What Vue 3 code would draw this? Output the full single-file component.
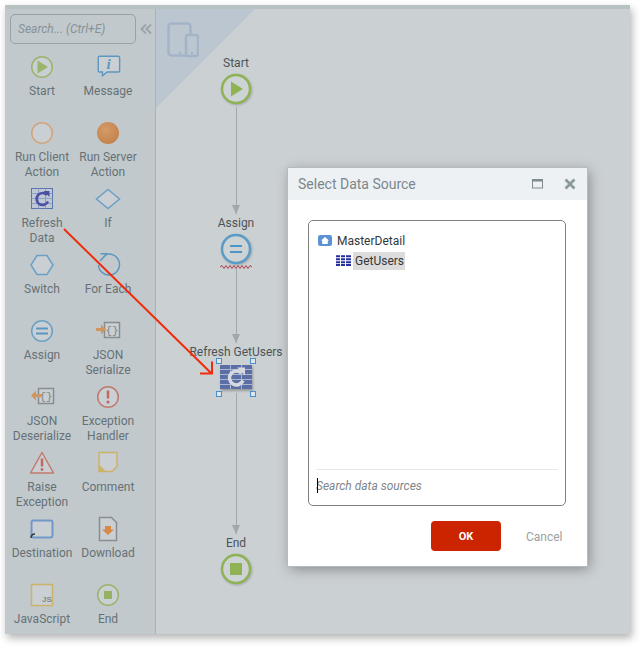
<template>
  <div class="page">
    <div class="window">
      <aside class="toolbox">
        <div class="search-row">
          <div class="search">Search... (Ctrl+E)</div>
          <svg class="collapse" width="12" height="12" viewBox="0 0 12 12"><path d="M6 1.500 1.500 6 6 10.500M11 1.500 6.500 6l4.500 4.500" fill="none" stroke="#9aa6ac" stroke-width="2"/></svg>
        </div>
        <div class="tools">
          <div v-for="tool in tools" :key="tool.name" class="tool">
            <svg class="tool-icon" width="28" height="28" viewBox="0 0 28 28">
              <template v-if="tool.icon === 'start'">
                <circle cx="14" cy="14" r="10.300" fill="#c9cfd2" stroke="#9ab56c" stroke-width="1.500"/>
                <path d="M9.500 7.500 20 14 9.500 20.500z" fill="#9ab56c"/>
              </template>
              <template v-else-if="tool.icon === 'message'">
                <path d="M5 3.500h20a1.500 1.500 0 0 1 1.500 1.500v14a1.500 1.500 0 0 1-1.500 1.500H13l-5 4v-4H5A1.500 1.500 0 0 1 3.500 19V5A1.500 1.500 0 0 1 5 3.500z" fill="#c9cfd2" stroke="#5c97bf" stroke-width="1.500" transform="translate(1 0) scale(.93)"/>
                <text x="14.500" y="16" class="i-mark">i</text>
              </template>
              <circle v-else-if="tool.icon === 'client'" cx="14" cy="14" r="10.300" fill="#c9cfd2" stroke="#d3a47c" stroke-width="1.500"/>
              <template v-else-if="tool.icon === 'server'">
                <defs>
                  <radialGradient id="server-fill" cx="40%" cy="35%" r="70%">
                    <stop offset="0" stop-color="#d49a68"/>
                    <stop offset="1" stop-color="#c4824a"/>
                  </radialGradient>
                </defs>
                <circle cx="14" cy="14" r="11" fill="url(#server-fill)"/>
              </template>
              <template v-else-if="tool.icon === 'refresh'">
                <rect x="3.500" y="3.500" width="21" height="20" fill="#c0c8d4" stroke="#5a74ad"/>
                <path d="M3.500 8.500h21M3.500 13.500h21M3.500 18.500h21M10.500 3.500v20M17.500 3.500v20" stroke="#8f9fc4"/>
                <path d="M19 10a6 6 0 1 0 1 6.500" fill="none" stroke="#4a4fa3" stroke-width="2.500"/>
                <path d="M15.500 6h6v6z" fill="#4a4fa3"/>
              </template>
              <path v-else-if="tool.icon === 'if'" d="M14 4.500 25.500 14 14 23.500 2.500 14z" fill="#c9cfd2" stroke="#6ba0c6" stroke-width="1.500"/>
              <path v-else-if="tool.icon === 'switch'" d="M9 4.500h10L25 14l-6 9.500H9L3 14z" fill="#c9cfd2" stroke="#6ba0c6" stroke-width="1.500"/>
              <template v-else-if="tool.icon === 'foreach'">
                <path d="M10 3.800A10.500 10.500 0 1 1 3.500 14" fill="none" stroke="#5c97bf" stroke-width="1.500" transform="translate(1 0)"/>
                <path d="M6.500 2.800h7M12.800 2.800 6 10" fill="none" stroke="#5c97bf" stroke-width="1.500"/>
              </template>
              <template v-else-if="tool.icon === 'assign'">
                <circle cx="14" cy="14" r="10.300" fill="#c9cfd2" stroke="#6ba0c6" stroke-width="1.500"/>
                <path d="M8 11.500h12M8 16.500h12" stroke="#5c97bf" stroke-width="2"/>
              </template>
              <template v-else-if="tool.icon === 'serialize'">
                <rect x="10.500" y="5.500" width="15" height="15" fill="#c9cfd2" stroke="#868e91" stroke-width="1.500"/>
                <text x="18" y="16.500" class="braces">{}</text>
                <path d="M2 11.500h5V8l5 5-5 5v-3.500H2z" fill="#d19560" transform="translate(0 -.500)"/>
              </template>
              <template v-else-if="tool.icon === 'deserialize'">
                <rect x="10.500" y="5.500" width="15" height="15" fill="#c9cfd2" stroke="#868e91" stroke-width="1.500"/>
                <text x="18" y="16.500" class="braces">{}</text>
                <path d="M13 11.500H7V8l-5 5 5 5v-3.500h6z" fill="#d19560" transform="translate(1 -.500)"/>
              </template>
              <template v-else-if="tool.icon === 'exception'">
                <circle cx="14" cy="14" r="10.300" fill="#c9cfd2" stroke="#c27a6e" stroke-width="1.500"/>
                <path d="M14 7.500v8" stroke="#bf6a5c" stroke-width="2.500"/>
                <circle cx="14" cy="19" r="1.500" fill="#bf6a5c"/>
              </template>
              <template v-else-if="tool.icon === 'raise'">
                <path d="M14 3.500 25.500 24h-23z" fill="#c9cfd2" stroke="#c27a6e" stroke-width="1.500" stroke-linejoin="round"/>
                <path d="M14 9.500v8" stroke="#bf6a5c" stroke-width="2.500"/>
                <circle cx="14" cy="20.500" r="1.400" fill="#bf6a5c"/>
              </template>
              <template v-else-if="tool.icon === 'comment'">
                <path d="M5 3.500h18v14l-5 5H5z" fill="#c9cfd2" stroke="#ccb36a" stroke-width="1.500"/>
                <path d="M5 15.500l7 7h-7z" fill="#ccb36a"/>
              </template>
              <template v-else-if="tool.icon === 'destination'">
                <rect x="3.500" y="5.500" width="21" height="17" rx="2" fill="#c9cfd2" stroke="#7099c8" stroke-width="2"/>
                <path d="M3 23c0-3 1-4 4-4" fill="none" stroke="#33383a" stroke-width="1.500"/>
              </template>
              <template v-else-if="tool.icon === 'download'">
                <path d="M5.500 2.500h12l5 5v18h-17z" fill="#c9cfd2" stroke="#868e91" stroke-width="1.500"/>
                <path d="M11 11h6v3.500h3L14 20l-6-5.500h3z" fill="#d58b45"/>
              </template>
              <template v-else-if="tool.icon === 'js'">
                <rect x="3.500" y="3.500" width="21" height="21" fill="#c9cfd2" stroke="#ccb36a" stroke-width="1.500"/>
                <text x="19" y="21" class="js-mark">JS</text>
              </template>
              <template v-else-if="tool.icon === 'end'">
                <circle cx="14" cy="14" r="10.300" fill="#c9cfd2" stroke="#9ab56c" stroke-width="1.500"/>
                <rect x="10" y="10" width="8" height="8" fill="#96b162"/>
              </template>
            </svg>
            <div class="tool-name">{{ tool.name }}</div>
          </div>
        </div>
      </aside>

      <main class="canvas">
        <div class="corner"></div>
        <svg class="devices" width="32" height="36" viewBox="0 0 32 36">
          <rect x="1.500" y="1.500" width="22" height="32" rx="3" fill="none" stroke="#a3b4c8" stroke-width="2.500"/>
          <rect x="19" y="13" width="12" height="21" rx="2" fill="#bcc6d0" stroke="#a3b4c8" stroke-width="2.500"/>
          <circle cx="13" cy="31" r="1.200" fill="#a3b4c8"/>
          <circle cx="25" cy="31" r="1.200" fill="#a3b4c8"/>
        </svg>

        <div class="flow">
          <div class="node-label first">Start</div>
          <svg class="node" width="32" height="32" viewBox="0 0 32 32">
            <circle cx="16" cy="16" r="14" fill="#cdd3d5" stroke="#8fb254" stroke-width="2.500"/>
            <path d="M11 8.500 23 16 11 23.500z" fill="#8fb254"/>
          </svg>
          <div class="connector long-a"></div>
          <div class="node-label">Assign</div>
          <svg class="node" width="32" height="32" viewBox="0 0 32 32">
            <circle cx="16" cy="16" r="14" fill="#cdd3d5" stroke="#5a9bc8" stroke-width="2.500"/>
            <path d="M10 13h12M10 19h12" stroke="#4f94c6" stroke-width="2"/>
          </svg>
          <svg class="squiggle" width="32" height="4" viewBox="0 0 32 4"><path d="M0 2l2-1.500 2 3 2-3 2 3 2-3 2 3 2-3 2 3 2-3 2 3 2-3 2 3 2-3 2 3 2-3 2 1.500" fill="none" stroke="#b04050" stroke-width="1"/></svg>
          <div class="connector short"></div>
          <div class="node-label">Refresh GetUsers</div>
          <div class="selected">
            <svg width="32" height="24" viewBox="0 0 32 24" class="refresh-node">
              <rect width="32" height="24" fill="#5b6fa6"/>
              <path d="M0 4.500h32M0 9.500h32M0 14.500h32M0 19.500h32M10.500 0v24M21.500 0v24" stroke="#aab5cf" stroke-width="1"/>
              <path d="M21.500 8a7 7 0 1 0 1.500 7.500" fill="none" stroke="#d5dade" stroke-width="3.500"/>
              <path d="M17 2.500h8v8z" fill="#d5dade"/>
            </svg>
            <i class="handle tl"></i><i class="handle tr"></i><i class="handle bl"></i><i class="handle br"></i>
          </div>
          <div class="connector long-b"></div>
          <div class="node-label">End</div>
          <svg class="node" width="32" height="32" viewBox="0 0 32 32">
            <circle cx="16" cy="16" r="14" fill="#cdd3d5" stroke="#8fb254" stroke-width="2.500"/>
            <rect x="10" y="10" width="12" height="12" fill="#8fb254"/>
          </svg>
        </div>

        <section class="dialog">
          <header class="dialog-head">
            <span class="dialog-title">Select Data Source</span>
            <svg class="head-icon" width="12" height="12" viewBox="0 0 12 12"><rect x=".500" y="1.500" width="10" height="8.500" fill="none" stroke="#7f8b90"/><path d="M.500 2.500h10" stroke="#7f8b90" stroke-width="2"/></svg>
            <svg class="head-icon close" width="12" height="12" viewBox="0 0 12 12"><path d="M1.500 1.500l9 9M10.500 1.500l-9 9" stroke="#8d989d" stroke-width="2.800"/></svg>
          </header>
          <div class="dialog-body">
            <div class="source-box">
              <div class="tree">
                <div class="tree-row">
                  <svg width="14" height="11" viewBox="0 0 14 11"><rect x=".500" y=".500" width="13" height="10" rx="1" fill="#e8f0fa" stroke="#5b92d6"/><path d="M1 1h12v9H1z" fill="#5b92d6"/><path d="M7 2 3 5.500h1.200V9h5.600V5.500H11z" fill="#fff"/></svg>
                  <span>MasterDetail</span>
                </div>
                <div class="tree-row child">
                  <svg width="15" height="11" viewBox="0 0 15 11"><path d="M0 1.250h15M0 4.250h15M0 7.250h15M0 10h15" stroke="#262f9c" stroke-width="2"/><path d="M4.500 0v11M9.500 0v11" stroke="#fff" stroke-width="1"/></svg>
                  <span class="picked">GetUsers</span>
                </div>
              </div>
              <div class="source-search"><i class="caret"></i>Search data sources</div>
            </div>
            <div class="dialog-actions">
              <button class="ok">OK</button>
              <span class="cancel">Cancel</span>
            </div>
          </div>
        </section>
      </main>
      <svg class="drag-arrow" width="643" height="648" viewBox="0 0 643 648">
        <path d="M64 229 211 373M200 373.500h12v-12" fill="none" stroke="#f02c0c" stroke-width="2"/>
      </svg>
    </div>
  </div>
</template>

<script setup>
const tools = [
  { name: 'Start', icon: 'start' },
  { name: 'Message', icon: 'message' },
  { name: 'Run Client Action', icon: 'client' },
  { name: 'Run Server Action', icon: 'server' },
  { name: 'Refresh Data', icon: 'refresh' },
  { name: 'If', icon: 'if' },
  { name: 'Switch', icon: 'switch' },
  { name: 'For Each', icon: 'foreach' },
  { name: 'Assign', icon: 'assign' },
  { name: 'JSON Serialize', icon: 'serialize' },
  { name: 'JSON Deserialize', icon: 'deserialize' },
  { name: 'Exception Handler', icon: 'exception' },
  { name: 'Raise Exception', icon: 'raise' },
  { name: 'Comment', icon: 'comment' },
  { name: 'Destination', icon: 'destination' },
  { name: 'Download', icon: 'download' },
  { name: 'JavaScript', icon: 'js' },
  { name: 'End', icon: 'end' }
]
</script>

<style scoped>
.page {
  width: 643px;
  height: 648px;
  padding: 5px 0 0 5px;
  box-sizing: border-box;
  background: #fff;
  font-family: Roboto, "Noto Sans", sans-serif;
  overflow: hidden;
}

.window {
  width: 625px;
  height: 629px;
  display: flex;
  border-top: 4px solid #b9c2c3;
  box-sizing: border-box;
  background: #cbd0d3;
  box-shadow: 2px 4px 8px rgba(0, 0, 0, 0.3);
}

.toolbox {
  width: 150px;
  flex: none;
  background: #c2c9cc;
  border-right: 1px solid #a9b3b7;
  box-sizing: content-box;
}

.search-row {
  display: flex;
  align-items: center;
  padding: 5px 0 0 5px;
  gap: 4px;
}

.search {
  height: 28px;
  border: 1px solid #97a1a6;
  border-radius: 5px;
  font-size: 12px;
  font-style: italic;
  line-height: 28px;
  padding-left: 7px;
  width: 117px;
  color: #879297;
}

.collapse {
  flex: none;
}

.tools {
  display: grid;
  grid-template-columns: 66px 66px;
  grid-auto-rows: 66px;
  padding: 9px 0 0 4px;
}

.tool {
  display: flex;
  flex-direction: column;
  align-items: center;
  text-align: center;
  color: #667176;
  font-size: 12px;
  line-height: 15px;
}

.tool-icon {
  flex: none;
  margin-bottom: 3px;
}

.tool-name {
  width: 66px;
}

.i-mark {
  font-family: "Liberation Serif", serif;
  font-style: italic;
  font-weight: 700;
  font-size: 15px;
  fill: #5c97bf;
  text-anchor: middle;
}

.braces {
  font-family: "Liberation Mono", monospace;
  font-size: 11px;
  fill: #7c8487;
  text-anchor: middle;
}

.js-mark {
  font-family: "Liberation Sans", sans-serif;
  font-size: 8px;
  font-weight: 700;
  fill: #80888c;
  text-anchor: middle;
}

.canvas {
  flex: 1;
  position: relative;
  min-width: 0;
}

.corner {
  position: absolute;
  left: 0;
  top: 0;
  width: 99px;
  height: 99px;
  background: #bcc6d0;
  clip-path: polygon(0 0, 100% 0, 0 100%);
}

.devices {
  position: absolute;
  left: 11px;
  top: 13px;
}

.flow {
  position: relative;
  width: 160px;
  display: flex;
  flex-direction: column;
  align-items: center;
}

.node-label {
  font-size: 12px;
  line-height: 16px;
  color: #4d5457;
  white-space: nowrap;
}

.node-label.first {
  margin-top: 46px;
}

.node {
  display: block;
  margin-top: 2px;
  flex: none;
  filter: drop-shadow(1px 1px 1px rgba(0, 0, 0, 0.2));
}

.connector {
  position: relative;
  width: 1px;
  background: #a0a8ab;
  margin-top: 2px;
  margin-bottom: 1px;
}

.connector::after {
  content: "";
  position: absolute;
  left: -4px;
  bottom: 0;
  border-left: 4.500px solid transparent;
  border-right: 4.500px solid transparent;
  border-top: 9px solid #a0a8ab;
}

.long-a {
  height: 107px;
}

.short {
  height: 74px;
  margin-top: 0;
}

.long-b {
  height: 141px;
  margin-top: 4px;
}

.squiggle {
  display: block;
  flex: none;
}

.selected {
  position: relative;
  width: 32px;
  height: 24px;
  margin-top: 5px;
}

.refresh-node {
  display: block;
  filter: drop-shadow(1px 2px 1px rgba(0, 0, 0, 0.25));
}

.handle {
  position: absolute;
  width: 4px;
  height: 4px;
  border: 1px solid #4a90c8;
  background: #dfe6ea;
}

.tl { left: -4px; top: -7px; }
.tr { right: -4px; top: -7px; }
.bl { left: -4px; bottom: -8px; }
.br { right: -4px; bottom: -8px; }

.dialog {
  position: absolute;
  left: 132px;
  top: 159px;
  width: 299px;
  height: 398px;
  background: #fff;
  box-shadow: 0 0 0 1px #b4bcbf, 2px 3px 12px rgba(0, 0, 0, 0.35);
  display: flex;
  flex-direction: column;
}

.dialog-head {
  height: 32px;
  flex: none;
  display: flex;
  align-items: center;
  padding: 0 11px 0 10px;
  background: #edf1f4;
}

.dialog-title {
  flex: 1;
  font-size: 14px;
  color: #7b878c;
}

.head-icon {
  flex: none;
  margin-left: 25px;
}

.head-icon.close {
  margin-left: 20px;
}

.dialog-body {
  flex: 1;
  padding: 20px 21px 0 20px;
}

.source-box {
  height: 286px;
  box-sizing: border-box;
  border: 1px solid #808080;
  border-radius: 5px;
  display: flex;
  flex-direction: column;
  padding: 10px 7px 0;
}

.tree {
  flex: 1;
}

.tree-row {
  display: flex;
  align-items: center;
  gap: 5px;
  height: 19px;
  padding-left: 2px;
  font-size: 12px;
  color: #33383a;
}

.tree-row.child {
  padding-left: 20px;
  gap: 2px;
  margin-top: 1px;
}

.picked {
  background: #dcdcdc;
  padding: 0 1px 0 2px;
  line-height: 18px;
}

.source-search {
  position: relative;
  height: 35px;
  border-top: 1px solid #e6e8ea;
  font-size: 12px;
  font-style: italic;
  line-height: 32px;
  color: #808689;
}

.caret {
  position: absolute;
  left: 1px;
  top: 8px;
  width: 1px;
  height: 15px;
  background: #000;
}

.dialog-actions {
  display: flex;
  align-items: center;
  margin-top: 15px;
}

.ok {
  width: 70px;
  height: 30px;
  margin-left: 123px;
  border: 0;
  border-radius: 4px;
  background: #cc2400;
  color: #fff;
  font-family: inherit;
  font-size: 11px;
  font-weight: 700;
  padding: 0;
}

.cancel {
  margin-left: 25px;
  margin-top: 2px;
  font-size: 12px;
  color: #9a9fa1;
}

.drag-arrow {
  position: absolute;
  left: 0;
  top: 0;
  pointer-events: none;
}
</style>
